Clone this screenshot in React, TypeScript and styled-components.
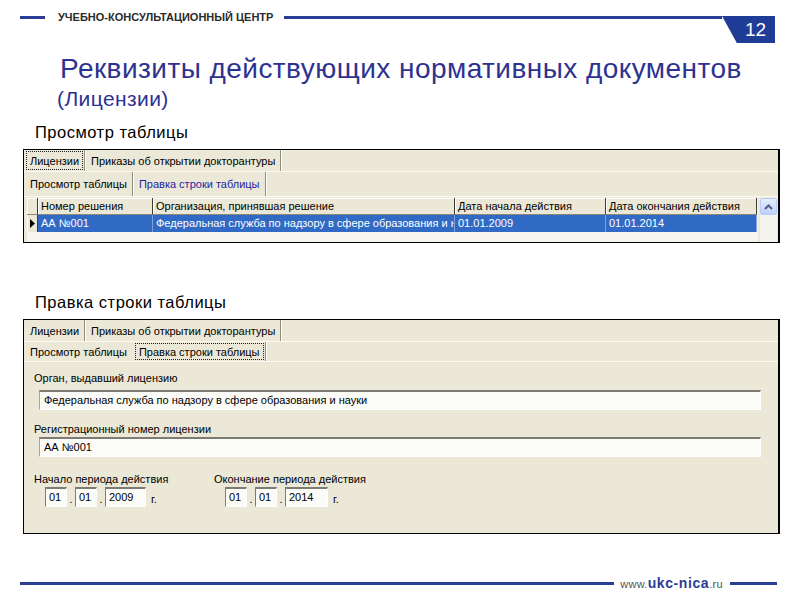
import React from "react";
import styled, { createGlobalStyle } from "styled-components";

const BLUE = "#2b3e97";
const WIN = "#ebe8d8";

const GlobalStyle = createGlobalStyle`
  html, body {
    margin: 0;
    padding: 0;
    background: #fff;
  }
  body {
    font-family: "Liberation Sans", Arial, sans-serif;
  }
`;

const Page = styled.div`
  width: 800px;
  height: 600px;
  display: flex;
  flex-direction: column;
  overflow: hidden;
  background: #fff;
`;

/* ---------- header ---------- */

const Header = styled.header`
  display: flex;
  align-items: flex-start;
  height: 45px;
  flex: none;
`;

const Rule = styled.div<{ $w?: number }>`
  height: 3px;
  margin-top: 16px;
  background: ${BLUE};
  ${(p) => (p.$w ? `width: ${p.$w}px; flex: none;` : "flex: 1;")}
`;

const Brand = styled.div`
  margin: 11px 11px 0 13px;
  font-size: 11px;
  line-height: 13px;
  font-weight: bold;
  color: #2b2b2b;
  white-space: nowrap;
`;

const Badge = styled.div`
  width: 53px;
  height: 27px;
  margin: 16px 25px 0 0;
  padding-left: 14px;
  box-sizing: border-box;
  display: flex;
  align-items: center;
  justify-content: center;
  background: #1f3c96;
  clip-path: polygon(0 0, 100% 0, 100% 100%, 28% 100%);
  color: #fff;
  font-size: 19px;
`;

/* ---------- titles ---------- */

const Title = styled.h1`
  margin: 8px 0 0 60px;
  font-size: 28px;
  line-height: 31px;
  letter-spacing: 0.45px;
  font-weight: normal;
  color: #2d3291;
  white-space: nowrap;
`;

const Subtitle = styled.div`
  margin: 3px 0 0 57px;
  font-size: 21px;
  line-height: 24px;
  letter-spacing: 0.4px;
  color: #2d3291;
`;

const SectionLabel = styled.div<{ $top: number }>`
  margin: ${(p) => p.$top}px 0 0 35px;
  font-size: 16.5px;
  line-height: 18px;
  letter-spacing: 0.5px;
  color: #000;
`;

/* ---------- window panels ---------- */

const Panel = styled.div<{ $h?: number }>`
  margin: 8px 0 0 23px;
  width: 757px;
  ${(p) => (p.$h ? `height: ${p.$h}px;` : "")}
  box-sizing: border-box;
  border: 1px solid #000;
  border-right-width: 2px;
  background: ${WIN};
  display: flex;
  flex-direction: column;
  overflow: hidden;
  font-size: 11px;
  color: #000;
`;

const TabRow = styled.div<{ $h: number }>`
  display: flex;
  height: ${(p) => p.$h}px;
  flex: none;
  padding-left: 1px;
  border-bottom: 1px solid #fbfaf4;
`;

const Tab = styled.div<{ $link?: boolean; $sep?: boolean }>`
  display: flex;
  align-items: center;
  padding: 1px 1px;
  color: ${(p) => (p.$link ? "#1f1fa0" : "#000")};
  border-right: 1px solid ${(p) => (p.$sep === false ? "transparent" : "#8f8c80")};
  box-shadow: ${(p) => (p.$sep === false ? "none" : "1px 0 0 #fff")};
  margin-right: 1px;
`;

const TabText = styled.span<{ $focus?: boolean }>`
  display: flex;
  align-items: center;
  height: 100%;
  padding: 0 3px;
  box-sizing: border-box;
  border: 1px dotted ${(p) => (p.$focus ? "#222" : "transparent")};
  white-space: nowrap;
`;

/* ---------- data grid ---------- */

const GridArea = styled.div`
  display: flex;
  flex: 1;
  margin: 1px 0 0 3px;
  min-height: 0;
`;

const Table = styled.div`
  width: 731px;
  background: #f6f5ef;
`;

const GridRow = styled.div`
  display: grid;
  grid-template-columns: 11px 115px 302px 151px 151px;
  height: 17px;
`;

const HeadCell = styled.div`
  box-sizing: border-box;
  padding-left: 3px;
  line-height: 16px;
  background: ${WIN};
  border-right: 1px solid #3c3b36;
  border-bottom: 1px solid #8a877a;
  box-shadow: inset 1px 1px 0 #fff;
  white-space: nowrap;
  overflow: hidden;
`;

const Cell = styled.div<{ $selected?: boolean }>`
  box-sizing: border-box;
  padding-left: 3px;
  line-height: 16px;
  background: ${(p) => (p.$selected ? "#316ac5" : "#fff")};
  color: ${(p) => (p.$selected ? "#fff" : "#000")};
  border-right: 1px solid ${(p) => (p.$selected ? "#7e9fd9" : "#c9c6b8")};
  white-space: nowrap;
  overflow: hidden;
  text-overflow: clip;
`;

const Indicator = styled.div`
  display: flex;
  align-items: center;
  justify-content: center;
  background: ${WIN};
  border-right: 1px solid #3c3b36;
  box-shadow: inset 1px 0 0 #fff;
`;

const ScrollBar = styled.div`
  width: 17px;
  margin-left: 2px;
  background: #f4f3ee;
`;

const ScrollButton = styled.div`
  width: 17px;
  height: 17px;
  box-sizing: border-box;
  border: 1px solid #b7cbf5;
  border-radius: 2px;
  background: linear-gradient(#e4edfe, #bdd1fa);
  display: flex;
  align-items: center;
  justify-content: center;
`;

/* ---------- edit form ---------- */

const Form = styled.div`
  padding: 10px 0 26px 10px;
`;

const FieldLabel = styled.div<{ $top?: number }>`
  margin-top: ${(p) => p.$top ?? 0}px;
  line-height: 13px;
  white-space: nowrap;
`;

const TextInput = styled.div<{ $top: number }>`
  margin: ${(p) => p.$top}px 0 0 5px;
  width: 722px;
  height: 20px;
  box-sizing: border-box;
  padding-left: 4px;
  line-height: 17px;
  background: #fbfbf7;
  border-top: 2px solid #7d7c74;
  border-left: 1px solid #a8a69c;
  border-bottom: 1px solid #fff;
  border-right: 1px solid #fff;
  white-space: nowrap;
`;

const DateRow = styled.div`
  display: flex;
  margin-top: 2px;
`;

const DateGroup = styled.div<{ $w?: number }>`
  ${(p) => (p.$w ? `width: ${p.$w}px;` : "")}
  display: flex;
  flex-direction: column;
`;

const DateFields = styled.div`
  display: flex;
  align-items: flex-end;
  margin: 1px 0 0 11px;
`;

const DateBox = styled.div<{ $w: number }>`
  width: ${(p) => p.$w}px;
  height: 20px;
  box-sizing: border-box;
  padding-left: 3px;
  line-height: 17px;
  background: #fbfbf7;
  border-top: 2px solid #7d7c74;
  border-left: 1px solid #7d7c74;
  border-bottom: 1px solid #fff;
  border-right: 1px solid #fff;
`;

const Dot = styled.span`
  width: 8px;
  text-align: center;
  line-height: 16px;
`;

const Year = styled.span`
  margin-left: 5px;
  line-height: 16px;
`;

/* ---------- footer ---------- */

const Footer = styled.footer`
  margin-top: auto;
  display: flex;
  align-items: center;
  height: 16px;
  padding-bottom: 9px;
`;

const FooterRule = styled.div<{ $w?: number }>`
  height: 3px;
  background: ${BLUE};
  ${(p) => (p.$w ? `width: ${p.$w}px; flex: none;` : "flex: 1;")}
`;

const Site = styled.div`
  margin: 0 7px 0 6px;
  font-size: 11px;
  color: #555;
  white-space: nowrap;
  letter-spacing: 0.3px;
  b {
    font-size: 14px;
    color: ${BLUE};
    letter-spacing: 0.6px;
  }
`;

const rows = [
  {
    number: "АА №001",
    org: "Федеральная служба по надзору в сфере образования и науки",
    from: "01.01.2009",
    to: "01.01.2014",
  },
];

function Tabs({ focusFirst, second }: { focusFirst: boolean; second: "view" | "edit" }) {
  return (
    <>
      <TabRow $h={21}>
        <Tab>
          <TabText $focus={focusFirst}>Лицензии</TabText>
        </Tab>
        <Tab>
          <TabText>Приказы об открытии докторантуры</TabText>
        </Tab>
      </TabRow>
      <TabRow $h={second === "view" ? 24 : 19}>
        <Tab $sep={second === "view"}>
          <TabText>Просмотр таблицы</TabText>
        </Tab>
        <Tab $link={second === "view"}>
          <TabText $focus={second === "edit"}>Правка строки таблицы</TabText>
        </Tab>
      </TabRow>
    </>
  );
}

export default function App() {
  return (
    <Page>
      <GlobalStyle />
      <Header>
        <Rule $w={25} style={{ marginLeft: 20 }} />
        <Brand>УЧЕБНО-КОНСУЛЬТАЦИОННЫЙ ЦЕНТР</Brand>
        <Rule />
        <Badge>12</Badge>
      </Header>

      <Title>Реквизиты действующих нормативных документов</Title>
      <Subtitle>(Лицензии)</Subtitle>

      <SectionLabel $top={12}>Просмотр таблицы</SectionLabel>
      <Panel $h={94}>
        <Tabs focusFirst second="view" />
        <GridArea>
          <Table>
            <GridRow>
              <HeadCell />
              <HeadCell>Номер решения</HeadCell>
              <HeadCell>Организация, принявшая решение</HeadCell>
              <HeadCell>Дата начала действия</HeadCell>
              <HeadCell>Дата окончания действия</HeadCell>
            </GridRow>
            {rows.map((r) => (
              <GridRow key={r.number}>
                <Indicator>
                  <svg width="5" height="9" viewBox="0 0 5 9">
                    <polygon points="0,0 5,4.5 0,9" fill="#000" />
                  </svg>
                </Indicator>
                <Cell $selected>{r.number}</Cell>
                <Cell $selected>{r.org}</Cell>
                <Cell $selected>{r.from}</Cell>
                <Cell $selected>{r.to}</Cell>
              </GridRow>
            ))}
          </Table>
          <ScrollBar>
            <ScrollButton>
              <svg width="9" height="6" viewBox="0 0 9 6">
                <polyline
                  points="1,5 4.5,1.5 8,5"
                  fill="none"
                  stroke="#4d6185"
                  strokeWidth="2"
                />
              </svg>
            </ScrollButton>
          </ScrollBar>
        </GridArea>
      </Panel>

      <SectionLabel $top={50}>Правка строки таблицы</SectionLabel>
      <Panel>
        <Tabs focusFirst={false} second="edit" />
        <Form>
          <FieldLabel>Орган, выдавший лицензию</FieldLabel>
          <TextInput $top={5}>
            Федеральная служба по надзору в сфере образования и науки
          </TextInput>
          <FieldLabel $top={13}>Регистрационный номер лицензии</FieldLabel>
          <TextInput $top={1}>АА №001</TextInput>
          <DateRow>
            <DateGroup $w={180}>
              <FieldLabel $top={14}>Начало периода действия</FieldLabel>
              <DateFields>
                <DateBox $w={22}>01</DateBox>
                <Dot>.</Dot>
                <DateBox $w={22}>01</DateBox>
                <Dot>.</Dot>
                <DateBox $w={41}>2009</DateBox>
                <Year>г.</Year>
              </DateFields>
            </DateGroup>
            <DateGroup>
              <FieldLabel $top={14}>Окончание периода действия</FieldLabel>
              <DateFields>
                <DateBox $w={22}>01</DateBox>
                <Dot>.</Dot>
                <DateBox $w={22}>01</DateBox>
                <Dot>.</Dot>
                <DateBox $w={43}>2014</DateBox>
                <Year>г.</Year>
              </DateFields>
            </DateGroup>
          </DateRow>
        </Form>
      </Panel>

      <Footer>
        <FooterRule style={{ marginLeft: 20 }} />
        <Site>
          www.<b>ukc-nica</b>.ru
        </Site>
        <FooterRule $w={47} style={{ marginRight: 23 }} />
      </Footer>
    </Page>
  );
}
